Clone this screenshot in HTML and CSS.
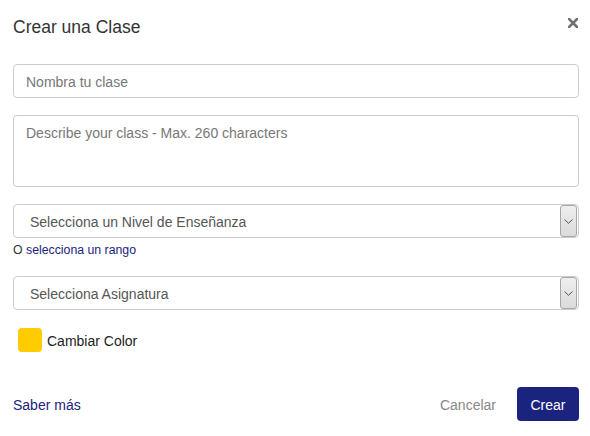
FILE: index.html
```html
<!DOCTYPE html>
<html lang="es">
<head>
<meta charset="utf-8">
<title>Crear una Clase</title>
<link rel="stylesheet" href="styles.css">
</head>
<body>
<div class="modal">
  <div class="modal-header">
    <h1 class="modal-title">Crear una Clase</h1>
    <button class="close" type="button" aria-label="Cerrar">
      <svg width="10" height="10" viewBox="0 0 10 10"><path d="M1 1 L9 9 M9 1 L1 9" stroke="#707070" stroke-width="2.6" stroke-linecap="square"/></svg>
    </button>
  </div>
  <form class="modal-body">
    <div class="field">
      <input class="control" type="text" placeholder="Nombra tu clase">
    </div>
    <div class="field">
      <textarea class="control area" placeholder="Describe your class - Max. 260 characters"></textarea>
    </div>
    <div class="field field-tight">
      <div class="select">
        <span class="select-text">Selecciona un Nivel de Enseñanza</span>
        <span class="select-btn"><svg width="9" height="5" viewBox="0 0 9 5"><path d="M0.5 0.5 L4.5 4.3 L8.5 0.5" fill="none" stroke="#555" stroke-width="1"/></svg></span>
      </div>
      <p class="hint">O <a href="#" class="hint-link">selecciona un rango</a></p>
    </div>
    <div class="field field-color">
      <div class="select">
        <span class="select-text">Selecciona Asignatura</span>
        <span class="select-btn"><svg width="9" height="5" viewBox="0 0 9 5"><path d="M0.5 0.5 L4.5 4.3 L8.5 0.5" fill="none" stroke="#555" stroke-width="1"/></svg></span>
      </div>
    </div>
    <div class="color-row">
      <span class="swatch"></span>
      <span class="color-label">Cambiar Color</span>
    </div>
  </form>
  <div class="modal-footer">
    <a href="#" class="learn">Saber más</a>
    <div class="actions">
      <button type="button" class="btn-cancel">Cancelar</button>
      <button type="button" class="btn-primary">Crear</button>
    </div>
  </div>
</div>
</body>
</html>
```
FILE: styles.css
```css
* { box-sizing: border-box; }
html, body { margin: 0; padding: 0; background: #fff; }
body { font-family: "Liberation Sans", Arial, sans-serif; font-size: 14px; color: #333; }

.modal { width: 590px; height: 436px; padding: 0 11px 0 13px; }

.modal-header { display: flex; justify-content: space-between; align-items: flex-start; padding-top: 17px; }
.modal-title { margin: 0; font-size: 17.5px; line-height: 21px; font-weight: normal; color: #333; }
.close { border: 0; background: none; padding: 0; margin: 0.5px 1.5px 0 0; width: 10px; height: 10px; display: flex; cursor: pointer; }

.modal-body { margin: 26px 0 0; }
.field { margin-bottom: 17px; }
.field-color { margin-bottom: 18px; }

.control { display: block; width: 100%; height: 34px; padding: 7px 12px 5px; border: 1px solid #ccc; border-radius: 4px; font-family: inherit; font-size: 14px; line-height: 20px; color: #555; background: #fff; outline: none; }
.control::placeholder { color: #777; opacity: 1; }
.area { height: 72px; resize: none; }

.select { display: flex; align-items: stretch; height: 34px; border: 1px solid #ccc; border-radius: 4px; background: #fff; }
.select-text { flex: 1; padding: 1px 0 0 16px; line-height: 32px; color: #555; font-size: 14px; }
.select-btn { width: 17px; margin-right: 1px; display: flex; align-items: center; justify-content: center; border: 1px solid #a6a6a6; border-radius: 3px; background: linear-gradient(#efefef, #dadada); }

.hint { margin: 3px 0 0; font-size: 12.3px; line-height: 18px; color: #333; }
.hint-link { color: #1a237e; text-decoration: none; }

.color-row { display: flex; align-items: center; margin-left: 5px; }
.swatch { width: 24px; height: 24px; border-radius: 4px; background: #ffcc00; }
.color-label { margin-left: 5px; padding-top: 2px; color: #222; font-size: 14px; line-height: 20px; }

.modal-footer { display: flex; justify-content: space-between; align-items: center; margin-top: 35px; }
.learn { color: #1a237e; text-decoration: none; font-size: 14px; padding-top: 2px; }
.actions { display: flex; align-items: center; gap: 21px; }
.btn-cancel { border: 0; background: none; padding: 2px 0 0; font-family: inherit; font-size: 14px; color: #888; cursor: pointer; }
.btn-primary { height: 34px; width: 62px; padding: 1px 0 0; border: 0; border-radius: 4px; background: #1a237e; color: #fff; font-family: inherit; font-size: 14px; cursor: pointer; }
```
